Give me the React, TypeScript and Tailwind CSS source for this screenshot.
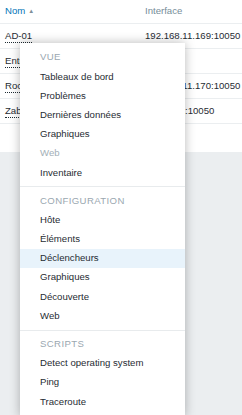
import React from 'react'

type MenuItem = { label: string; disabled?: boolean; active?: boolean }
type MenuSection = { title: string; items: MenuItem[] }

const hosts = [
  { name: 'AD-01', iface: '192.168.11.169:10050' },
  { name: 'Entrepôt-SRV', iface: '' },
  { name: 'Rocky-Linux', iface: '192.168.11.170:10050' },
  { name: 'Zabbix server', iface: '127.0.0.1:10050' },
]

const sections: MenuSection[] = [
  {
    title: 'Vue',
    items: [
      { label: 'Tableaux de bord' },
      { label: 'Problèmes' },
      { label: 'Dernières données' },
      { label: 'Graphiques' },
      { label: 'Web', disabled: true },
      { label: 'Inventaire' },
    ],
  },
  {
    title: 'Configuration',
    items: [
      { label: 'Hôte' },
      { label: 'Éléments' },
      { label: 'Déclencheurs', active: true },
      { label: 'Graphiques' },
      { label: 'Découverte' },
      { label: 'Web' },
    ],
  },
  {
    title: 'Scripts',
    items: [{ label: 'Detect operating system' }, { label: 'Ping' }, { label: 'Traceroute' }],
  },
]

function HostTable(): JSX.Element {
  return (
    <div className="h-[152px] bg-white">
      <div className="flex h-[24px] items-center border-b border-[#ebeef0]">
        <div className="flex w-[145px] items-center pl-[5px] text-[#0275b8]">
          Nom
          <span className="ml-[3px] text-[6px] leading-none text-[#7f8f99]">▲</span>
        </div>
        <div className="text-[#768d99]">Interface</div>
      </div>
      {hosts.map((h) => (
        <div key={h.name} className="flex h-[25px] items-center border-b border-[#ebeef0]">
          <div className="w-[145px] pl-[5px]">
            <span className="border-b border-dotted border-[#1f2c33] pb-[1px] leading-none">{h.name}</span>
          </div>
          <div className="whitespace-nowrap">{h.iface}</div>
        </div>
      ))}
    </div>
  )
}

function ContextMenu(): JSX.Element {
  return (
    <div className="absolute left-[20px] top-[43px] w-[165px] bg-white pt-[5px] pb-[6px] shadow-[0_0_10px_rgba(0,0,0,0.28)]">
      {sections.map((s, i) => (
        <div key={s.title}>
          {i > 0 ? <div className="mt-[4px] mb-[4px] h-px bg-[#e8ebed]" /> : null}
          <div className="flex h-[19.2px] items-center px-[20px] uppercase tracking-[0.04em] text-[#9aa7b0]">
            {s.title}
          </div>
          {s.items.map((it) => (
            <div
              key={it.label}
              className={[
                'flex h-[19.2px] items-center px-[20px] whitespace-nowrap',
                it.active ? 'bg-[#e8f3fb]' : '',
                it.disabled ? 'text-[#a3afb7]' : 'text-[#1f2c33]',
              ].join(' ')}
            >
              {it.label}
            </div>
          ))}
        </div>
      ))}
    </div>
  )
}

export default function App(): JSX.Element {
  return (
    <div className="relative h-[415px] w-[242px] overflow-hidden bg-[#ebeef0] font-['Liberation_Sans',Arial,sans-serif] text-[9.6px] text-[#1f2c33]">
      <HostTable />
      <ContextMenu />
    </div>
  )
}
